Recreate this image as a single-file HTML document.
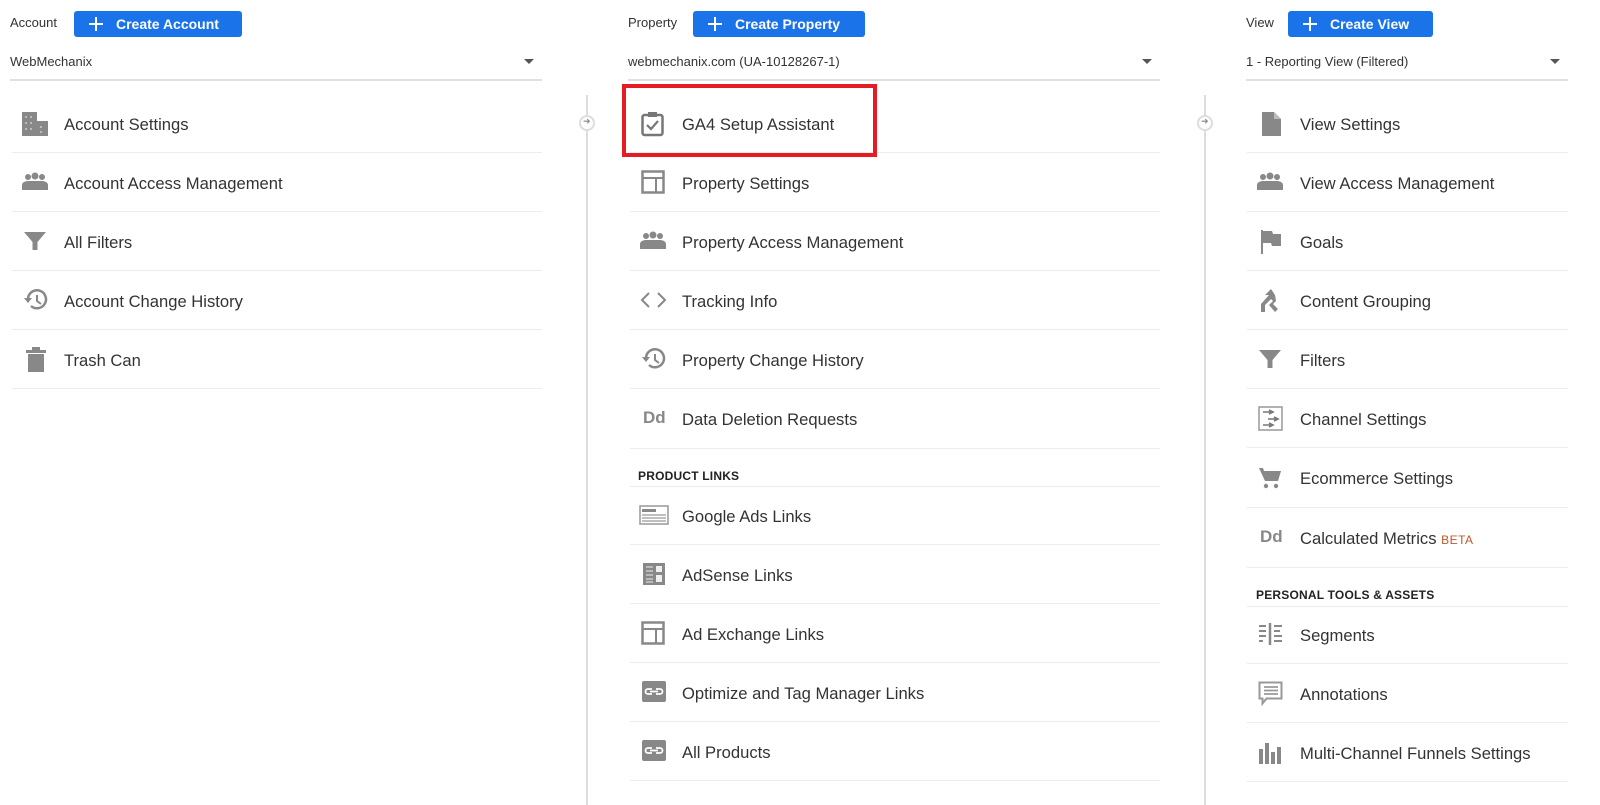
<!DOCTYPE html>
<html><head><meta charset="utf-8"><style>
body{margin:0;width:1600px;height:805px;background:#fff;font-family:"Liberation Sans",Arial,sans-serif;position:relative;overflow:hidden;color:#333}
.a{position:absolute}
.lbl{font-size:13px;color:#333}
.btn{position:absolute;height:26px;background:#1a73e8;border-radius:3px;color:#fff;font-weight:bold;font-size:14px;line-height:26px;box-sizing:border-box;padding-left:42px}
.btn svg{position:absolute;left:14px;top:5px}
.dd{position:absolute;font-size:13px;color:#333;height:17px;border-bottom:2px solid #e0e0e0;padding-bottom:8px}
.dd:after{content:"";position:absolute;right:8px;top:5px;border:5px solid transparent;border-top:5px solid #555}
.it{position:absolute;height:59px;border-bottom:1px solid #ececec;box-sizing:border-box}
.it span{position:absolute;top:21px;font-size:16.6px;color:#333}
.it svg{position:absolute;top:17px}
.hd{position:absolute;font-size:12px;font-weight:bold;color:#222;letter-spacing:.2px}
.vl{position:absolute;width:2px;background:#ddd;top:95px;height:710px}
.cir{position:absolute;width:16px;height:16px;border:2px solid #ddd;border-radius:50%;background:#fff;box-sizing:border-box}
.cir:after{content:"➜";position:absolute;left:2px;top:-1px;font-size:9px;color:#888}
.dd2{font-weight:bold;font-size:17px;color:#888;position:absolute;top:19px}
</style></head><body>

<div class="a lbl" style="left:10px;top:15px">Account</div>
<div class="btn" style="left:74px;top:11px;width:168px"><svg width="16" height="16"><path d="M8 1v14M1 8h14" stroke="#fff" stroke-width="2"/></svg>Create Account</div>
<div class="dd" style="left:10px;top:54px;width:532px">WebMechanix</div>

<div class="a lbl" style="left:628px;top:15px">Property</div>
<div class="btn" style="left:693px;top:11px;width:172px"><svg width="16" height="16"><path d="M8 1v14M1 8h14" stroke="#fff" stroke-width="2"/></svg>Create Property</div>
<div class="dd" style="left:628px;top:54px;width:532px">webmechanix.com (UA-10128267-1)</div>

<div class="a lbl" style="left:1246px;top:15px">View</div>
<div class="btn" style="left:1288px;top:11px;width:145px"><svg width="16" height="16"><path d="M8 1v14M1 8h14" stroke="#fff" stroke-width="2"/></svg>Create View</div>
<div class="dd" style="left:1246px;top:54px;width:322px">1 - Reporting View (Filtered)</div>

<div class="vl" style="left:586px"></div>
<div class="vl" style="left:1204px"></div>
<div class="cir" style="left:579px;top:115px"></div>
<div class="cir" style="left:1197px;top:115px"></div>

<!-- Column 1 -->
<div class="it" style="left:12px;top:94px;width:530px"><svg style="left:9px" width="28" height="26"><rect x="1" y="1" width="15" height="24" fill="#888"/><rect x="16" y="10" width="11" height="15" fill="#888"/><g fill="#bbb"><rect x="4" y="5" width="2" height="2"/><rect x="9" y="5" width="2" height="2"/><rect x="4" y="11" width="2" height="2"/><rect x="9" y="11" width="2" height="2"/><rect x="4" y="17" width="2" height="2"/><rect x="9" y="17" width="2" height="2"/><rect x="19" y="15" width="2" height="2"/><rect x="19" y="20" width="2" height="2"/></g></svg><span style="left:52px">Account Settings</span></div>
<div class="it" style="left:12px;top:153px;width:530px"><svg style="left:9px" width="28" height="24"><g fill="#888"><circle cx="7" cy="7" r="3"/><circle cx="14" cy="6" r="3.5"/><circle cx="21" cy="7" r="3"/><path d="M1 20v-5c0-3 4-4 6-4 2 0 4 0 7 0s5 0 7 0c2 0 6 1 6 4v5z"/></g></svg><span style="left:52px">Account Access Management</span></div>
<div class="it" style="left:12px;top:212px;width:530px"><svg style="left:11px" width="26" height="24"><path d="M1 3h22l-8.5 10v8h-5v-8z" fill="#888"/></svg><span style="left:52px">All Filters</span></div>
<div class="it" style="left:12px;top:271px;width:530px"><svg style="left:12px" width="26" height="24"><path d="M4 11a9 9 0 1 1 3 7" fill="none" stroke="#888" stroke-width="2.5"/><path d="M0 10l4 5 4-5z" fill="#888"/><path d="M13 7v6l4 3" fill="none" stroke="#888" stroke-width="2"/></svg><span style="left:52px">Account Change History</span></div>
<div class="it" style="left:12px;top:330px;width:530px"><svg style="left:13px" width="24" height="26"><rect x="1" y="3" width="20" height="3" fill="#888"/><rect x="7" y="0" width="8" height="3" fill="#888"/><rect x="3" y="7" width="16" height="18" fill="#888"/></svg><span style="left:52px">Trash Can</span></div>

<!-- Column 2 -->
<div class="it" style="left:630px;top:94px;width:530px"><svg style="left:11px" width="24" height="26"><rect x="1.5" y="4" width="20" height="20" rx="2" fill="none" stroke="#777" stroke-width="2.5"/><rect x="7" y="1" width="9" height="5" fill="#777"/><path d="M6 14l4 4 7-8" fill="none" stroke="#777" stroke-width="2.2"/></svg><span style="left:52px">GA4 Setup Assistant</span></div>
<div class="it" style="left:630px;top:153px;width:530px"><svg style="left:11px" width="26" height="26"><rect x="1.5" y="1.5" width="21" height="21" fill="none" stroke="#888" stroke-width="2.5"/><path d="M1 8h22M15 8v15" stroke="#888" stroke-width="2"/></svg><span style="left:52px">Property Settings</span></div>
<div class="it" style="left:630px;top:212px;width:530px"><svg style="left:9px" width="28" height="24"><g fill="#888"><circle cx="7" cy="7" r="3"/><circle cx="14" cy="6" r="3.5"/><circle cx="21" cy="7" r="3"/><path d="M1 20v-5c0-3 4-4 6-4 2 0 4 0 7 0s5 0 7 0c2 0 6 1 6 4v5z"/></g></svg><span style="left:52px">Property Access Management</span></div>
<div class="it" style="left:630px;top:271px;width:530px"><svg style="left:10px" width="28" height="24"><path d="M9 5l-7 7 7 7M18 5l7 7-7 7" fill="none" stroke="#888" stroke-width="2"/></svg><span style="left:52px">Tracking Info</span></div>
<div class="it" style="left:630px;top:330px;width:530px"><svg style="left:12px" width="26" height="24"><path d="M4 11a9 9 0 1 1 3 7" fill="none" stroke="#888" stroke-width="2.5"/><path d="M0 10l4 5 4-5z" fill="#888"/><path d="M13 7v6l4 3" fill="none" stroke="#888" stroke-width="2"/></svg><span style="left:52px">Property Change History</span></div>
<div class="it" style="left:630px;top:389px;width:530px;height:60px"><b class="dd2" style="left:13px">Dd</b><span style="left:52px">Data Deletion Requests</span></div>
<div class="hd" style="left:638px;top:469px">PRODUCT LINKS</div>
<div class="a" style="left:630px;top:486px;width:530px;height:1px;background:#ececec"></div>
<div class="it" style="left:630px;top:486px;width:530px"><svg style="left:9px" width="30" height="24"><rect x="1" y="3" width="28" height="18" fill="none" stroke="#999" stroke-width="1.5"/><rect x="3" y="6" width="14" height="3" fill="#888"/><path d="M3 12h24M3 15h24M3 18h24" stroke="#aaa" stroke-width="1.5"/></svg><span style="left:52px">Google Ads Links</span></div>
<div class="it" style="left:630px;top:545px;width:530px"><svg style="left:12px" width="24" height="24"><rect x="1" y="1" width="22" height="22" fill="#888"/><path d="M4 5h7M4 9h7M4 13h7M4 17h7M4 20h7" stroke="#ccc" stroke-width="1.5"/><rect x="14" y="4" width="6" height="6" fill="#eee"/><rect x="14" y="13" width="6" height="7" fill="#eee"/></svg><span style="left:52px">AdSense Links</span></div>
<div class="it" style="left:630px;top:604px;width:530px"><svg style="left:11px" width="26" height="26"><rect x="1.5" y="1.5" width="21" height="21" fill="none" stroke="#888" stroke-width="2.5"/><path d="M1 8h22M15 8v15" stroke="#888" stroke-width="2"/></svg><span style="left:52px">Ad Exchange Links</span></div>
<div class="it" style="left:630px;top:663px;width:530px"><svg style="left:12px" width="24" height="24"><rect x="0" y="1" width="24" height="21" rx="2" fill="#888"/><path d="M10 9h-4a2.5 2.5 0 0 0 0 5h4M14 9h4a2.5 2.5 0 0 1 0 5h-4M8 11.5h8" fill="none" stroke="#fff" stroke-width="1.8"/></svg><span style="left:52px">Optimize and Tag Manager Links</span></div>
<div class="it" style="left:630px;top:722px;width:530px"><svg style="left:12px" width="24" height="24"><rect x="0" y="1" width="24" height="21" rx="2" fill="#888"/><path d="M10 9h-4a2.5 2.5 0 0 0 0 5h4M14 9h4a2.5 2.5 0 0 1 0 5h-4M8 11.5h8" fill="none" stroke="#fff" stroke-width="1.8"/></svg><span style="left:52px">All Products</span></div>

<!-- Column 3 -->
<div class="it" style="left:1247px;top:94px;width:321px"><svg style="left:14px" width="22" height="26"><path d="M1 1h12l7 7v17H1z" fill="#888"/><path d="M13 1v7h7" fill="#bbb"/></svg><span style="left:53px">View Settings</span></div>
<div class="it" style="left:1247px;top:153px;width:321px"><svg style="left:9px" width="28" height="24"><g fill="#888"><circle cx="7" cy="7" r="3"/><circle cx="14" cy="6" r="3.5"/><circle cx="21" cy="7" r="3"/><path d="M1 20v-5c0-3 4-4 6-4 2 0 4 0 7 0s5 0 7 0c2 0 6 1 6 4v5z"/></g></svg><span style="left:53px">View Access Management</span></div>
<div class="it" style="left:1247px;top:212px;width:321px"><svg style="left:12px" width="24" height="26"><path d="M2 1h2v24H2zM4 2h9l1 3h8v12h-9l-1-3H4z" fill="#888"/></svg><span style="left:53px">Goals</span></div>
<div class="it" style="left:1247px;top:271px;width:321px"><svg style="left:12px" width="24" height="26"><path d="M12 1l-6 6h4l-8 9v8h4v-7l6-6 2 2-4 4 6 7 3-3-5-5 3-3-1-6z" fill="#888"/></svg><span style="left:53px">Content Grouping</span></div>
<div class="it" style="left:1247px;top:330px;width:321px"><svg style="left:11px" width="26" height="24"><path d="M1 3h22l-8.5 10v8h-5v-8z" fill="#888"/></svg><span style="left:53px">Filters</span></div>
<div class="it" style="left:1247px;top:389px;width:321px"><svg style="left:11px" width="26" height="26"><rect x="1" y="1" width="23" height="23" fill="none" stroke="#999" stroke-width="1.5"/><path d="M5 6h10M11 4l4 2-4 2M10 13h10M16 11l4 2-4 2M5 19h10M11 17l4 2-4 2" fill="none" stroke="#777" stroke-width="1.6"/></svg><span style="left:53px">Channel Settings</span></div>
<div class="it" style="left:1247px;top:448px;width:321px;height:60px"><svg style="left:11px" width="26" height="26"><path d="M1 3h4l1 3h17l-3 10H7z" fill="#888"/><circle cx="8" cy="21" r="2.2" fill="#888"/><circle cx="18" cy="21" r="2.2" fill="#888"/></svg><span style="left:53px">Ecommerce Settings</span></div>
<div class="it" style="left:1247px;top:508px;width:321px;height:60px"><b class="dd2" style="left:13px">Dd</b><span style="left:53px">Calculated Metrics <small style="font-size:12px;color:#c0582b;letter-spacing:.5px">BETA</small></span></div>
<div class="hd" style="left:1256px;top:588px">PERSONAL TOOLS &amp; ASSETS</div>
<div class="a" style="left:1247px;top:606px;width:321px;height:1px;background:#ececec"></div>
<div class="it" style="left:1247px;top:605px;width:321px"><svg style="left:11px" width="26" height="24"><path d="M12 1v22" stroke="#888" stroke-width="2.5"/><path d="M1 4h7M1 9h7M1 14h7M1 19h4M16 4h8M16 9h6M16 14h8M16 19h8" stroke="#888" stroke-width="2"/></svg><span style="left:53px">Segments</span></div>
<div class="it" style="left:1247px;top:664px;width:321px"><svg style="left:11px" width="26" height="26"><path d="M1.5 1.5h22v16h-15l-4 5v-5h-3z" fill="none" stroke="#999" stroke-width="2"/><path d="M6 6h14M6 9.5h14M6 13h14" stroke="#999" stroke-width="1.8"/></svg><span style="left:53px">Annotations</span></div>
<div class="it" style="left:1247px;top:723px;width:321px"><svg style="left:11px" width="26" height="26"><g fill="#888"><rect x="1" y="9" width="4" height="15"/><rect x="7" y="3" width="4" height="21"/><rect x="13" y="12" width="4" height="12"/><rect x="19" y="7" width="4" height="17"/></g></svg><span style="left:53px">Multi-Channel Funnels Settings</span></div>

<!-- red highlight -->
<div class="a" style="left:622px;top:84px;width:255px;height:73px;border:4px solid #e51c23;box-sizing:border-box"></div>
</body></html>
